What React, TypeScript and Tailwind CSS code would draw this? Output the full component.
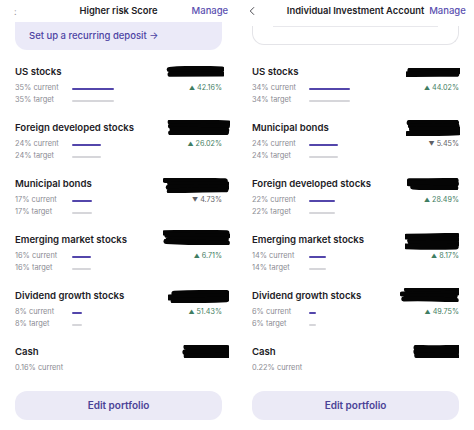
import { ChevronLeft } from "lucide-react"

type Holding = {
  name: string
  pct: number
  change?: number
  current?: string
  blot: { w: number; h: number; dy: number; mr: number; seed: number }
}

const leftHoldings: Holding[] = [
  { name: "US stocks", pct: 35, change: 42.16, blot: { w: 59, h: 11, dy: 1, mr: -2, seed: 1 } },
  { name: "Foreign developed stocks", pct: 24, change: 26.02, blot: { w: 63, h: 15, dy: -1, mr: -8, seed: 2 } },
  { name: "Municipal bonds", pct: 17, change: -4.73, blot: { w: 66, h: 15, dy: 1, mr: -7, seed: 3 } },
  { name: "Emerging market stocks", pct: 16, change: 6.71, blot: { w: 67, h: 15, dy: -3, mr: -8, seed: 4 } },
  { name: "Dividend growth stocks", pct: 8, change: 51.43, blot: { w: 61, h: 13, dy: 1, mr: -7, seed: 5 } },
  { name: "Cash", pct: 0, current: "0.16%", blot: { w: 48, h: 13, dy: 0, mr: -7, seed: 6 } },
]

const rightHoldings: Holding[] = [
  { name: "US stocks", pct: 34, change: 44.02, blot: { w: 54, h: 9, dy: 3, mr: -1, seed: 7 } },
  { name: "Municipal bonds", pct: 24, change: -5.45, blot: { w: 54, h: 16, dy: -1, mr: -1, seed: 8 } },
  { name: "Foreign developed stocks", pct: 22, change: 28.49, blot: { w: 52, h: 12, dy: 1, mr: 0, seed: 9 } },
  { name: "Emerging market stocks", pct: 14, change: 8.17, blot: { w: 54, h: 17, dy: 0, mr: 0, seed: 10 } },
  { name: "Dividend growth stocks", pct: 6, change: 49.75, blot: { w: 59, h: 14, dy: -1, mr: 0, seed: 11 } },
  { name: "Cash", pct: 0, current: "0.22%", blot: { w: 48, h: 13, dy: 0, mr: 0, seed: 12 } },
]

function rand(seed: number) {
  let s = seed * 9301 + 49297
  return () => {
    s = (s * 9301 + 49297) % 233280
    return s / 233280
  }
}

// black marker scribble over the hidden balances
function Blot({ w, h, seed }: { w: number; h: number; seed: number }) {
  const r = rand(seed)
  const lines = Math.max(2, Math.round(h / 4))
  const sw = h / lines + 1.5
  const paths = []
  for (let i = 0; i < lines; i++) {
    const y = sw / 2 + (i * (h - sw)) / Math.max(1, lines - 1)
    const x1 = 1 + r() * 6
    const x2 = w - 1 - r() * 3
    const y1 = y + (r() - 0.5) * 2
    const y2 = y + (r() - 0.5) * 2
    paths.push(
      <path
        key={i}
        d={`M${x1} ${y1} Q${w / 2} ${y + (r() - 0.5) * 3} ${x2} ${y2}`}
        stroke="#050505"
        strokeWidth={sw}
        strokeLinecap="round"
        fill="none"
      />
    )
  }
  return (
    <svg width={w} height={h} viewBox={`0 0 ${w} ${h}`} className="shrink-0">
      {paths}
    </svg>
  )
}

function HoldingRow({ item }: { item: Holding }) {
  const barW = Math.round(item.pct * 1.2)
  return (
    <div className="flex flex-col">
      <div className="flex h-[14px] items-start justify-between">
        <span className="text-[9.6px] font-semibold leading-[14px] text-[#1d1c26]">{item.name}</span>
        <div style={{ marginTop: item.blot.dy, marginRight: item.blot.mr }}>
          <Blot w={item.blot.w} h={item.blot.h} seed={item.blot.seed} />
        </div>
      </div>

      {item.current ? (
        <div className="mt-[3px] h-[12px] text-[7.4px] leading-[12px] text-[#8b8b93]">
          {item.current} current
        </div>
      ) : (
        <div className="mt-[3px] flex flex-col">
          <div className="flex h-[12px] items-center">
            <span className="w-[57px] text-[7.4px] leading-[12px] text-[#8b8b93]">{item.pct}% current</span>
            <div className="mt-[2px] h-[2px] rounded-full bg-[#5346ab]" style={{ width: barW }} />
            {item.change !== undefined && item.change >= 0 ? (
              <span className="ml-auto text-[7.2px] leading-[12px] text-[#3f7d62]">
                <span className="text-[6px]">▲</span> {item.change.toFixed(2)}%
              </span>
            ) : (
              <span className="ml-auto text-[7.2px] leading-[12px] text-[#5f5f66]">
                <span className="text-[6px]">▼</span> {Math.abs(item.change ?? 0).toFixed(2)}%
              </span>
            )}
          </div>
          <div className="flex h-[12px] items-center">
            <span className="w-[57px] text-[7.4px] leading-[12px] text-[#8b8b93]">{item.pct}% target</span>
            <div className="mt-[2px] h-[1.5px] rounded-full bg-[#d6d6da]" style={{ width: barW }} />
          </div>
        </div>
      )}
    </div>
  )
}

function Panel({
  title,
  manageGap,
  back,
  variant,
  holdings,
}: {
  title: string
  manageGap: number
  back: boolean
  variant: "deposit" | "blank"
  holdings: Holding[]
}) {
  return (
    <section className="flex w-[237px] shrink-0 flex-col overflow-hidden bg-white">
      <div className="h-[50px]">
        <div className="flex h-[22px] items-center px-[8px]">
          <div className="flex flex-1 items-center">
            {back ? (
              <ChevronLeft className="h-[14px] w-[14px] text-[#3f3f46]" strokeWidth={1.6} />
            ) : (
              <span className="ml-[6px] text-[9px] leading-none text-[#9a9aa0]">:</span>
            )}
          </div>
          <span className="whitespace-nowrap text-[9.4px] font-semibold text-[#1d1c26]">{title}</span>
          <div className="flex flex-1 items-center">
            <span
              className="whitespace-nowrap text-[9.5px] font-medium text-[#5a4fb0]"
              style={{ paddingLeft: manageGap }}
            >
              Manage
            </span>
          </div>
        </div>

        {variant === "deposit" ? (
          <div className="mx-[15px] flex h-[28px] items-center rounded-b-[12px] bg-[#ebeaf8] px-[14px]">
            <span className="text-[9.5px] font-medium text-[#4d43a3]">Set up a recurring deposit →</span>
          </div>
        ) : (
          <div className="mx-[15px] h-[19px] rounded-b-[12px] border-x border-b border-[#e4e4e8]">
            <div className="mx-[20px] mt-[4px] h-px bg-[#e8e8ec]" />
          </div>
        )}
      </div>

      <div className="mt-[15px] flex flex-col gap-[15px] px-[15px]">
        {holdings.map((h) => (
          <HoldingRow key={h.name} item={h} />
        ))}
      </div>

      <div className="mx-[15px] mt-[17px] flex h-[29px] items-center justify-center rounded-[12px] bg-[#ebeaf6]">
        <span className="text-[10px] font-semibold text-[#4a4396]">Edit portfolio</span>
      </div>
    </section>
  )
}

export default function App() {
  return (
    <div className="flex h-[430px] w-[474px] overflow-hidden bg-white font-['Inter','Noto_Sans',sans-serif]">
      <Panel title="Higher risk Score" manageGap={34} back={false} variant="deposit" holdings={leftHoldings} />
      <Panel title="Individual Investment Account" manageGap={5} back variant="blank" holdings={rightHoldings} />
    </div>
  )
}
